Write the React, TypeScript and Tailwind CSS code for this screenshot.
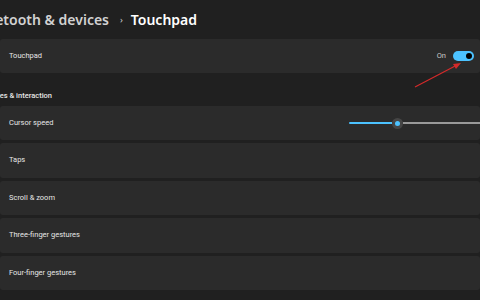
import React from "react";

const font = { fontFamily: '"Noto Sans", "Open Sans", sans-serif' };
const small = { fontFamily: 'Roboto, "Noto Sans", sans-serif' };

function Card({ label, h = "h-[34.5px]" }: { label: string; h?: string }) {
  return (
    <div className={`${h} w-full bg-[#2b2b2b] rounded-[3px] flex items-center pl-[9px] shrink-0`}>
      <span className="text-[7.5px] leading-[10px] text-[#e6e6e6]" style={small}>{label}</span>
    </div>
  );
}

export default function App() {
  return (
    <div className="relative w-[480px] h-[300px] bg-[#202020] overflow-hidden" style={font}>
      <div className="h-[39px] flex items-center whitespace-nowrap text-[14px] font-semibold">
        <div className="w-[109px] shrink-0 flex justify-end">
          <span className="text-[#d2d2d2]">Bluetooth &amp; devices</span>
        </div>
        <span className="text-[#cfcfcf] text-[9px] ml-[11px] mr-[8px] font-normal">›</span>
        <span className="text-white">Touchpad</span>
      </div>

      <div className="h-[34px] w-full bg-[#2b2b2b] rounded-[3px] flex items-center pl-[9px] pr-[6px]">
        <span className="text-[7.5px] leading-[10px] text-[#e6e6e6]" style={small}>Touchpad</span>
        <div className="ml-auto flex items-center">
          <span className="text-[7.5px] leading-[10px] text-[#c8c8c8] mr-[7px]" style={small}>On</span>
          <div className="w-[21px] h-[10px] rounded-full bg-[#4cc2ff] flex items-center justify-end pr-[2px]">
            <div className="w-[6px] h-[6px] rounded-full bg-black" />
          </div>
        </div>
      </div>

      <div className="h-[33px] flex items-end pb-[5px] whitespace-nowrap">
        <div className="w-[52px] shrink-0 flex justify-end">
          <span className="text-[7.5px] leading-[10px] font-medium text-[#e6e6e6]" style={small}>Gestures &amp; interaction</span>
        </div>
      </div>

      <div className="h-[34px] w-full bg-[#2b2b2b] rounded-[3px] flex items-center pl-[9px] mb-[3px]">
        <span className="text-[7.5px] leading-[10px] text-[#e6e6e6]" style={small}>Cursor speed</span>
        <div className="ml-auto w-[131px] flex items-center">
          <div className="w-[43px] h-[2px] bg-[#4cc2ff] rounded-l-full" />
          <div className="w-[11px] h-[11px] rounded-full bg-[#454545] flex items-center justify-center shrink-0">
            <div className="w-[5px] h-[5px] rounded-full bg-[#4cc2ff]" />
          </div>
          <div className="flex-1 h-[2px] bg-[#9a9a9a]" />
        </div>
      </div>

      <div className="flex flex-col gap-[3px]">
        <Card label="Taps" />
        <Card label="Scroll & zoom" />
        <Card label="Three-finger gestures" />
        <Card label="Four-finger gestures" />
      </div>

      <svg className="absolute left-0 top-0 pointer-events-none" width="480" height="300">
        <line x1="415" y1="87" x2="458" y2="64.5" stroke="#d42a2a" strokeWidth="1.2" />
        <polygon points="461,63 453,64 456,69" fill="#d42a2a" />
      </svg>
    </div>
  );
}
